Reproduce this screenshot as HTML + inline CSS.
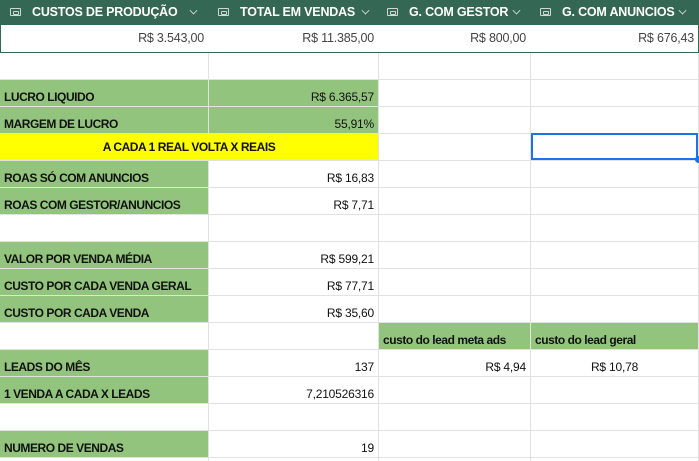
<!DOCTYPE html>
<html><head><meta charset="utf-8"><style>
*{margin:0;padding:0;box-sizing:border-box}
body{width:699px;height:461px;overflow:hidden;background:#fff;font-family:"Liberation Sans",Arial,sans-serif;position:relative}
.hd{position:absolute;top:0;left:0;width:699px;height:25px;background:#356854}
.h{position:absolute;top:0;height:25px;line-height:25px;color:#fff;font-weight:bold;font-size:12.5px;letter-spacing:-0.2px}
.ic{position:absolute;top:8px;width:11px;height:8px;border:1.5px solid #cfd9d4;border-radius:1px}
.ic:after{content:"";position:absolute;left:2px;top:1.5px;width:4px;height:2px;border:1px solid #cfd9d4;border-radius:1px}
.ch{position:absolute;top:7px;width:7px;height:7px;border-right:1.5px solid #d7e1dc;border-bottom:1.5px solid #d7e1dc;transform:rotate(45deg) scale(.8)}
.vl{position:absolute;background:#e2e2e2;width:1px}
.hl{position:absolute;background:#e2e2e2;height:1px;left:0;width:699px}
.c{position:absolute;height:27px;line-height:12px;padding-top:11px;font-size:12px;color:#111;white-space:nowrap;letter-spacing:-0.2px}
.g{background:#93c47d}
.b{font-weight:bold;letter-spacing:-0.45px}
.r{text-align:right;padding-right:4px}
.l{padding-left:4px}
.t{top:26px !important;padding-top:6px;color:#444;font-size:12.5px}
</style></head><body>
<div class="hd"></div>
<div class="ic" style="left:10px"></div><div class="h" style="left:32px">CUSTOS DE PRODUÇÃO</div><div class="ch" style="left:190px"></div>
<div class="ic" style="left:218px"></div><div class="h" style="left:240px">TOTAL EM VENDAS</div><div class="ch" style="left:362px"></div>
<div class="ic" style="left:387px"></div><div class="h" style="left:409px">G. COM GESTOR</div><div class="ch" style="left:513px"></div>
<div class="ic" style="left:540px"></div><div class="h" style="left:562px">G. COM ANUNCIOS</div><div class="ch" style="left:679px"></div>
<div style="position:absolute;top:25px;left:0;width:699px;height:28px;border:1.5px solid #356854;border-top:none"></div>
<div class="c r t" style="left:0;width:208px">R$ 3.543,00</div>
<div class="c r t" style="left:208px;width:170px">R$ 11.385,00</div>
<div class="c r t" style="left:378px;width:152px">R$ 800,00</div>
<div class="c r t" style="left:530px;width:168px">R$ 676,43</div>

<div class="vl" style="left:208px;top:53px;height:408px"></div>
<div class="vl" style="left:378px;top:53px;height:408px"></div>
<div class="vl" style="left:530px;top:53px;height:408px"></div>
<div class="vl" style="left:698px;top:53px;height:408px"></div>
<div class="hl" style="top:79px"></div><div class="hl" style="top:106px"></div><div class="hl" style="top:133px"></div><div class="hl" style="top:160px"></div><div class="hl" style="top:187px"></div><div class="hl" style="top:214px"></div><div class="hl" style="top:241px"></div><div class="hl" style="top:268px"></div><div class="hl" style="top:295px"></div><div class="hl" style="top:322px"></div><div class="hl" style="top:349px"></div><div class="hl" style="top:376px"></div><div class="hl" style="top:403px"></div><div class="hl" style="top:430px"></div><div class="hl" style="top:457px"></div>

<div class="c g b l" style="top:80px;left:0;width:208px;height:26px">LUCRO LIQUIDO</div>
<div class="c g r" style="top:80px;left:209px;width:169px;height:26px">R$ 6.365,57</div>
<div class="c g b l" style="top:107px;left:0;width:208px;height:26px">MARGEM DE LUCRO</div>
<div class="c g r" style="top:107px;left:209px;width:169px;height:26px">55,91%</div>
<div class="c b" style="top:133px;left:0;width:378px;height:27px;background:#ffff00;text-align:center;border-top:1px solid #e2e2e2;border-bottom:1px solid #e2e2e2;padding-top:7px">A CADA 1 REAL VOLTA X REAIS</div>
<div style="position:absolute;top:133px;left:531px;width:167px;height:27px;border:2px solid #1a73e8"></div>
<div style="position:absolute;top:156px;left:695px;width:7px;height:7px;border-radius:50%;background:#1a73e8"></div>

<div class="c g b l" style="top:161px;left:0;width:208px;height:26px">ROAS SÓ COM ANUNCIOS</div>
<div class="c r" style="top:161px;left:209px;width:169px">R$ 16,83</div>
<div class="c g b l" style="top:188px;left:0;width:208px;height:26px">ROAS COM GESTOR/ANUNCIOS</div>
<div class="c r" style="top:188px;left:209px;width:169px">R$ 7,71</div>

<div class="c g b l" style="top:242px;left:0;width:208px;height:26px">VALOR POR VENDA MÉDIA</div>
<div class="c r" style="top:242px;left:209px;width:169px">R$ 599,21</div>
<div class="c g b l" style="top:269px;left:0;width:208px;height:26px">CUSTO POR CADA VENDA GERAL</div>
<div class="c r" style="top:269px;left:209px;width:169px">R$ 77,71</div>
<div class="c g b l" style="top:296px;left:0;width:208px;height:26px">CUSTO POR CADA VENDA</div>
<div class="c r" style="top:296px;left:209px;width:169px">R$ 35,60</div>

<div class="c g b l" style="top:323px;left:379px;width:151px;height:26px">custo do lead meta ads</div>
<div class="c g b l" style="top:323px;left:531px;width:167px;height:26px">custo do lead geral</div>

<div class="c g b l" style="top:350px;left:0;width:208px;height:26px">LEADS DO MÊS</div>
<div class="c r" style="top:350px;left:209px;width:169px">137</div>
<div class="c r" style="top:350px;left:379px;width:151px">R$ 4,94</div>
<div class="c" style="top:350px;left:531px;width:167px;text-align:center">R$ 10,78</div>
<div class="c g b l" style="top:377px;left:0;width:208px;height:26px">1 VENDA A CADA X LEADS</div>
<div class="c r" style="top:377px;left:209px;width:169px">7,210526316</div>

<div class="c g b l" style="top:431px;left:0;width:208px;height:26px">NUMERO DE VENDAS</div>
<div class="c r" style="top:431px;left:209px;width:169px">19</div>
</body></html>
